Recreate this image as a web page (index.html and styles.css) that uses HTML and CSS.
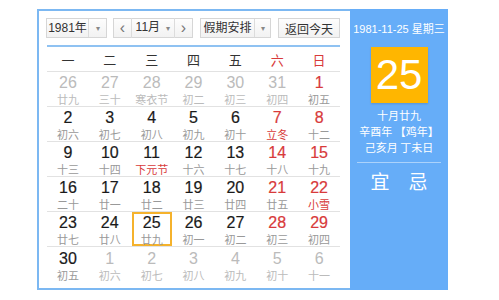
FILE: index.html
```html
<!DOCTYPE html>
<html lang="zh">
<head>
<meta charset="utf-8">
<link rel="stylesheet" href="styles.css">
</head>
<body>
<div class="cal">
  <div class="main">
    <div class="bar">
      <div class="sel year"><span class="val">1981年</span><span class="arr">▾</span></div>
      <div class="sel month">
        <span class="nav">&lsaquo;</span>
        <span class="mval">11月 <span class="arr2">▾</span></span>
        <span class="nav">&rsaquo;</span>
      </div>
      <div class="sel hol"><span class="val">假期安排</span><span class="arr">▾</span></div>
      <div class="btn">返回今天</div>
    </div>
    <div class="week">
      <span>一</span><span>二</span><span>三</span><span>四</span><span>五</span><span class="red">六</span><span class="red">日</span>
    </div>
    <div class="grid">
      <div class="row">
        <div class="c other"><b>26</b><i>廿九</i></div>
        <div class="c other"><b>27</b><i>三十</i></div>
        <div class="c other"><b>28</b><i>寒衣节</i></div>
        <div class="c other"><b>29</b><i>初二</i></div>
        <div class="c other"><b>30</b><i>初三</i></div>
        <div class="c other"><b>31</b><i>初四</i></div>
        <div class="c we"><b>1</b><i>初五</i></div>
      </div>
      <div class="row">
        <div class="c"><b>2</b><i>初六</i></div>
        <div class="c"><b>3</b><i>初七</i></div>
        <div class="c"><b>4</b><i>初八</i></div>
        <div class="c"><b>5</b><i>初九</i></div>
        <div class="c"><b>6</b><i>初十</i></div>
        <div class="c we"><b>7</b><i class="fest">立冬</i></div>
        <div class="c we"><b>8</b><i>十二</i></div>
      </div>
      <div class="row">
        <div class="c"><b>9</b><i>十三</i></div>
        <div class="c"><b>10</b><i>十四</i></div>
        <div class="c"><b>11</b><i class="fest">下元节</i></div>
        <div class="c"><b>12</b><i>十六</i></div>
        <div class="c"><b>13</b><i>十七</i></div>
        <div class="c we"><b>14</b><i>十八</i></div>
        <div class="c we"><b>15</b><i>十九</i></div>
      </div>
      <div class="row">
        <div class="c"><b>16</b><i>二十</i></div>
        <div class="c"><b>17</b><i>廿一</i></div>
        <div class="c"><b>18</b><i>廿二</i></div>
        <div class="c"><b>19</b><i>廿三</i></div>
        <div class="c"><b>20</b><i>廿四</i></div>
        <div class="c we"><b>21</b><i>廿五</i></div>
        <div class="c we"><b>22</b><i class="fest">小雪</i></div>
      </div>
      <div class="row">
        <div class="c"><b>23</b><i>廿七</i></div>
        <div class="c"><b>24</b><i>廿八</i></div>
        <div class="c today"><b>25</b><i>廿九</i></div>
        <div class="c"><b>26</b><i>初一</i></div>
        <div class="c"><b>27</b><i>初二</i></div>
        <div class="c we"><b>28</b><i>初三</i></div>
        <div class="c we"><b>29</b><i>初四</i></div>
      </div>
      <div class="row last">
        <div class="c"><b>30</b><i>初五</i></div>
        <div class="c other"><b>1</b><i>初六</i></div>
        <div class="c other"><b>2</b><i>初七</i></div>
        <div class="c other"><b>3</b><i>初八</i></div>
        <div class="c other"><b>4</b><i>初九</i></div>
        <div class="c other"><b>5</b><i>初十</i></div>
        <div class="c other"><b>6</b><i>十一</i></div>
      </div>
    </div>
  </div>
  <div class="side">
    <div class="date">1981-11-25 星期三</div>
    <div class="big">25</div>
    <div class="info">
      <div>十月廿九</div>
      <div>辛酉年 【鸡年】</div>
      <div>己亥月 丁未日</div>
    </div>
    <div class="yj"><span>宜</span><span>忌</span></div>
  </div>
</div>
</body>
</html>
```

FILE: styles.css
```css
* { box-sizing: border-box; }
body {
  margin: 0;
  background: #fff;
  font-family: "Liberation Sans", "Noto Sans CJK SC", Arial, sans-serif;
  color: #333;
}
.cal {
  display: flex;
  margin: 9px 0 0 37px;
  width: 411px;
  height: 281px;
}
.main {
  flex: 1;
  border: 2px solid #7cb8f2;
  border-right: none;
  padding: 7px 10px 0 7px;
}
.bar {
  display: flex;
  align-items: center;
  height: 20px;
  font-size: 12px;
  color: #333;
}
.sel, .btn {
  display: flex;
  align-items: center;
  height: 20px;
  border: 1px solid #d6d6d6;
  background: linear-gradient(#fdfdfd, #f2f2f2);
}
.year { width: 61px; margin-right: 6px; }
.year .val { width: 42px; text-align: center; border-right: 1px solid #dcdcdc; line-height: 18px; }
.arr { flex: 1; text-align: center; font-size: 8px; color: #888; }
.month { width: 80px; margin-right: 7px; }
.nav {
  width: 17px;
  text-align: center;
  font-size: 16px;
  line-height: 18px;
  color: #777;
}
.mval {
  flex: 1;
  text-align: center;
  border-left: 1px solid #dcdcdc;
  border-right: 1px solid #dcdcdc;
  line-height: 18px;
}
.arr2 { font-size: 8px; color: #888; margin-left: 3px; }
.hol { width: 71px; margin-right: 7px; }
.hol .val { width: 54px; text-align: center; border-right: 1px solid #dcdcdc; line-height: 18px; }
.btn { width: 62px; justify-content: center; }
.week {
  display: flex;
  margin: 7px 0 0 1px;
  border-top: 2px solid #8fc2f2;
  border-bottom: 1px solid #e2e2e2;
  height: 27px;
  align-items: center;
  font-size: 13px;
  font-family: "Noto Sans CJK SC", sans-serif;
}
.week span { flex: 1; text-align: center; }
.week .red { color: #d83a3a; }
.grid { margin-left: 1px; }
.row {
  display: flex;
  height: 35px;
  border-bottom: 1px solid #e2e2e2;
}
.row.last { border-bottom: none; }
.c {
  flex: 1;
  display: flex;
  flex-direction: column;
  align-items: center;
  justify-content: center;
  padding-top: 2px;
}
.c b {
  font-weight: normal;
  font-size: 16px;
  line-height: 18px;
  color: #1a1a1a;
  -webkit-text-stroke: 0.2px currentColor;
}
.c i {
  font-style: normal;
  font-size: 11px;
  line-height: 14px;
  color: #999;
  font-family: "Noto Sans CJK SC", sans-serif;
}
.c.we b { color: #d83a3a; }
.c i.fest { color: #d83a3a; }
.c.other b { color: #bbb; -webkit-text-stroke: 0; }
.c.other i { color: #bbb; }
.today {
  border: 2px solid #f5b22c;
  flex: 0 0 40px;
  margin: 0 1px;
}
.side {
  width: 99px;
  background: #66adf8;
  color: #fff;
  display: flex;
  flex-direction: column;
  align-items: center;
}
.date {
  margin-top: 13px;
  font-size: 11px;
  line-height: 14px;
}
.big {
  margin-top: 11px;
  width: 57px;
  height: 56px;
  background: #ffb600;
  box-shadow: 0 1px 2px rgba(0,0,0,0.15);
  font-size: 42px;
  line-height: 56px;
  text-align: center;
}
.info {
  margin-top: 4px;
  font-size: 11px;
  line-height: 16px;
  text-align: center;
  font-family: "Noto Sans CJK SC", sans-serif;
}
.yj {
  margin-top: 7px;
  width: 84px;
  border-top: 1px solid rgba(255,255,255,0.45);
  display: flex;
  justify-content: space-around;
  padding: 4px 4px 0;
  font-size: 19px;
  font-family: "Noto Sans CJK SC", sans-serif;
}
```
